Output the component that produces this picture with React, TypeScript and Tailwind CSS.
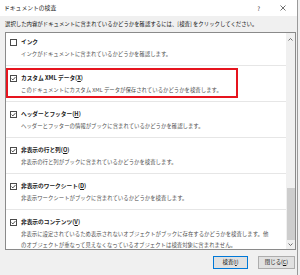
import React from "react";

const FONT = "font-['Noto_Sans_CJK_JP','Noto_Sans',sans-serif]";

function Check({ checked }: { checked: boolean }) {
  return (
    <svg width="7" height="7" viewBox="0 0 7 7" className="shrink-0">
      <rect x="0.5" y="0.5" width="6" height="6" fill="#fff" stroke="#4a4a4a" strokeWidth="1" />
      {checked && <path d="M1.6 3.6 L2.9 4.9 L5.4 2.1" fill="none" stroke="#333" strokeWidth="0.9" />}
    </svg>
  );
}

type Item = {
  title: string;
  key?: string;
  desc: string[];
  checked: boolean;
  boxed?: boolean;
  last?: boolean;
};

const items: Item[] = [
  { title: "インク", desc: ["インクがドキュメントに含まれているかどうかを確認します。"], checked: false },
  { title: "カスタム XML データ", key: "X", desc: ["このドキュメントにカスタム XML データが保存されているかどうかを検査します。"], checked: true, boxed: true },
  { title: "ヘッダーとフッター", key: "H", desc: ["ヘッダーとフッターの情報がブックに含まれているかどうかを確認します。"], checked: true },
  { title: "非表示の行と列", key: "O", desc: ["非表示の行と列がブックに含まれているかどうかを検査します。"], checked: true },
  { title: "非表示のワークシート", key: "D", desc: ["非表示ワークシートがブックに含まれているかどうかを検査します。"], checked: true },
  {
    title: "非表示のコンテンツ",
    key: "V",
    desc: [
      "非表示に設定されているため表示されないオブジェクトがブックに存在するかどうかを検査します。他",
      "のオブジェクトが重なって見えなくなっているオブジェクトは検査対象に含まれません。",
    ],
    checked: true,
    last: true,
  },
];

function Row({ it }: { it: Item }) {
  return (
    <div className={`relative pt-[7px] pb-[5px] ${it.last ? "" : "border-b border-[#e6e6e6]"}`}>
      {it.boxed && (
        <div className="absolute left-0 top-[2px] w-[232px] h-[30px] border-2 border-[#e6141e]" />
      )}
      <div className="flex items-center h-[10px] pl-[4px] gap-[4px]">
        <Check checked={it.checked} />
        <span className="text-[5.7px] leading-[10px] font-bold text-[#1a1a1a] whitespace-nowrap">
          {it.title}
          {it.key && (
            <>
              (<span className="underline">{it.key}</span>)
            </>
          )}
        </span>
      </div>
      <div className="mt-[2px] pl-[15px] text-[5.4px] leading-[11px] text-[#505050] whitespace-nowrap">
        {it.desc.map((d, i) => (
          <div key={i}>{d}</div>
        ))}
      </div>
    </div>
  );
}

export default function App() {
  return (
    <div className={`w-[300px] h-[275px] bg-[#f0f0f0] ${FONT} overflow-hidden flex`}>
      <div className="flex-1 flex flex-col border-r border-[#9a9a9a]">
        <div className="h-[16px] bg-white flex items-center pl-[4px] pr-[8px] shrink-0">
          <span className="text-[5.8px] text-[#222] flex-1">ドキュメントの検査</span>
          <span className="text-[6px] text-[#333] mr-[20px]">?</span>
          <svg width="6" height="6" viewBox="0 0 6 6" className="mr-[3px]">
            <path d="M0.5 0.5 L5.5 5.5 M5.5 0.5 L0.5 5.5" stroke="#333" strokeWidth="0.7" />
          </svg>
        </div>
        <div className="h-[16px] flex items-center pl-[5px] text-[5.4px] text-[#111] whitespace-nowrap shrink-0">
          選択した内容がドキュメントに含まれているかどうかを確認するには、[検査] をクリックしてください。
        </div>
        <div className="ml-[5px] mr-[1px] h-[218px] border border-[#8a8a8a] bg-white flex overflow-hidden shrink-0">
          <div className="flex-1 overflow-hidden">
            <div className="-mt-[3px]">
              {items.map((it, i) => (
                <Row key={i} it={it} />
              ))}
            </div>
          </div>
          <div className="w-[9px] bg-[#f0f0f0] flex flex-col items-center">
            <svg width="9" height="9" viewBox="0 0 9 9" className="mt-[2px]">
              <path d="M2.5 5.5 L4.5 3.5 L6.5 5.5" fill="none" stroke="#606060" strokeWidth="0.9" />
            </svg>
            <div className="flex-1" />
            <div className="w-[8px] h-[52px] bg-[#cdcdcd]" />
            <svg width="9" height="9" viewBox="0 0 9 9">
              <path d="M2.5 3.5 L4.5 5.5 L6.5 3.5" fill="none" stroke="#606060" strokeWidth="0.9" />
            </svg>
          </div>
        </div>
        <div className="flex justify-end gap-[10px] pr-[2px] mt-[6px]">
          <div className="w-[35px] h-[13px] bg-[#e1e1e1] border border-[#0078d7] flex items-center justify-center text-[5.4px] text-[#111]">
            <span>
              検査(<span className="underline">I</span>)
            </span>
          </div>
          <div className="w-[37px] h-[13px] bg-[#e1e1e1] border border-[#adadad] flex items-center justify-center text-[5.4px] text-[#111]">
            <span>
              閉じる(<span className="underline">C</span>)
            </span>
          </div>
        </div>
      </div>
      <div className="w-[2px] bg-[#f0f0f0]" />
    </div>
  );
}
